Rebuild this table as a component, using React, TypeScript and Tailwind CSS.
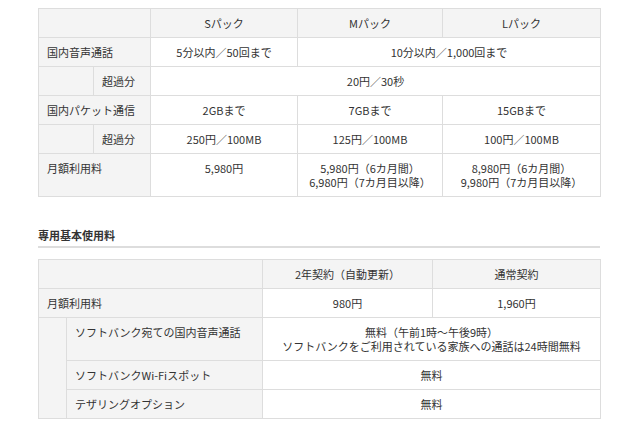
const cell = "border border-[#dddddd] px-[8px] py-[7px] align-top leading-[14px]";
const label = `${cell} bg-[#f4f4f4] text-left`;
const value = `${cell} bg-white text-center`;
const head = `${cell} bg-[#f4f4f4] text-center`;

export default function App() {
  return (
    <div
      className="min-h-[426px] bg-white pl-[38px] pt-[8px] text-[11px] text-[#333333]"
      style={{ fontFamily: '"Noto Sans CJK JP", "Noto Sans", sans-serif' }}
    >
      <table className="w-[562px] table-fixed border-collapse">
        <colgroup>
          <col className="w-[55px]" />
          <col className="w-[57px]" />
          <col className="w-[147px]" />
          <col className="w-[145px]" />
          <col className="w-[158px]" />
        </colgroup>
        <thead>
          <tr>
            <th className={`${head} font-normal`} colSpan={2}></th>
            <th className={`${head} font-normal`}>Sパック</th>
            <th className={`${head} font-normal`}>Mパック</th>
            <th className={`${head} font-normal`}>Lパック</th>
          </tr>
        </thead>
        <tbody>
          <tr>
            <td className={label} colSpan={2}>国内音声通話</td>
            <td className={value}>5分以内／50回まで</td>
            <td className={value} colSpan={2}>10分以内／1,000回まで</td>
          </tr>
          <tr>
            <td className={label}></td>
            <td className={label}>超過分</td>
            <td className={value} colSpan={3}>20円／30秒</td>
          </tr>
          <tr>
            <td className={label} colSpan={2}>国内パケット通信</td>
            <td className={value}>2GBまで</td>
            <td className={value}>7GBまで</td>
            <td className={value}>15GBまで</td>
          </tr>
          <tr>
            <td className={label}></td>
            <td className={label}>超過分</td>
            <td className={value}>250円／100MB</td>
            <td className={value}>125円／100MB</td>
            <td className={value}>100円／100MB</td>
          </tr>
          <tr>
            <td className={label} colSpan={2}>月額利用料</td>
            <td className={value}>5,980円</td>
            <td className={value}>
              5,980円（6カ月間）
              <br />
              6,980円（7カ月目以降）
            </td>
            <td className={value}>
              8,980円（6カ月間）
              <br />
              9,980円（7カ月目以降）
            </td>
          </tr>
        </tbody>
      </table>

      <h2 className="mt-[31px] w-[562px] border-b-2 border-[#dddddd] pb-[4px] text-[11px] font-bold leading-[14px]">
        専用基本使用料
      </h2>

      <table className="mt-[11px] w-[562px] table-fixed border-collapse">
        <colgroup>
          <col className="w-[28px]" />
          <col className="w-[196px]" />
          <col className="w-[170px]" />
          <col className="w-[168px]" />
        </colgroup>
        <thead>
          <tr>
            <th className={`${head} font-normal`} colSpan={2}></th>
            <th className={`${head} font-normal`}>2年契約（自動更新）</th>
            <th className={`${head} font-normal`}>通常契約</th>
          </tr>
        </thead>
        <tbody>
          <tr>
            <td className={label} colSpan={2}>月額利用料</td>
            <td className={value}>980円</td>
            <td className={value}>1,960円</td>
          </tr>
          <tr>
            <td className={label} rowSpan={3}></td>
            <td className={label}>ソフトバンク宛ての国内音声通話</td>
            <td className={value} colSpan={2}>
              無料（午前1時～午後9時）
              <br />
              ソフトバンクをご利用されている家族への通話は24時間無料
            </td>
          </tr>
          <tr>
            <td className={label}>ソフトバンクWi-Fiスポット</td>
            <td className={value} colSpan={2}>無料</td>
          </tr>
          <tr>
            <td className={label}>テザリングオプション</td>
            <td className={value} colSpan={2}>無料</td>
          </tr>
        </tbody>
      </table>
    </div>
  );
}
